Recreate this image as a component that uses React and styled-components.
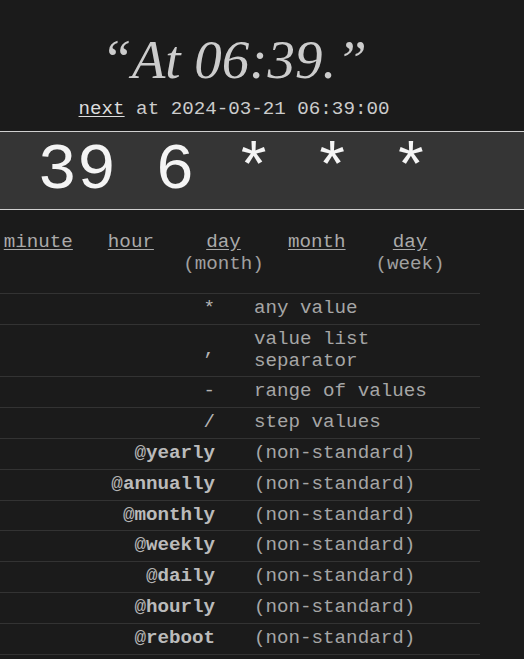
import styled, { createGlobalStyle } from "styled-components";

const GlobalStyle = createGlobalStyle`
  html, body {
    margin: 0;
    padding: 0;
    background: #1b1b1b;
    overflow: hidden;
  }
  body {
    font-family: "Liberation Mono", "Courier New", monospace;
    color: #aaa;
  }
`;

const fields = [
  { name: "minute" },
  { name: "hour" },
  { name: "day", sub: "(month)" },
  { name: "month" },
  { name: "day", sub: "(week)" },
];

const rows = [
  { sym: "*", desc: "any value" },
  { sym: ",", desc: "value list separator" },
  { sym: "-", desc: "range of values" },
  { sym: "/", desc: "step values" },
  { sym: "yearly", at: true, desc: "(non-standard)" },
  { sym: "annually", at: true, desc: "(non-standard)" },
  { sym: "monthly", at: true, desc: "(non-standard)" },
  { sym: "weekly", at: true, desc: "(non-standard)" },
  { sym: "daily", at: true, desc: "(non-standard)" },
  { sym: "hourly", at: true, desc: "(non-standard)" },
  { sym: "reboot", at: true, desc: "(non-standard)" },
];

const App = () => {
  return (
    <>
      <GlobalStyle />
      <Page>
        <Column>
          <Title>“At 06:39.”</Title>
          <NextRun>
            <NextLink>next</NextLink> at 2024-03-21 06:39:00
          </NextRun>
        </Column>
        <ExpressionBox>
          <Column>
            <Expression>39 6 * * *</Expression>
          </Column>
        </ExpressionBox>
        <FieldHeader>
          {fields.map((f, i) => (
            <Field key={i}>
              <FieldName>{f.name}</FieldName>
              {f.sub && <FieldSub>{f.sub}</FieldSub>}
            </Field>
          ))}
        </FieldHeader>
        <Legend>
          {rows.map((r) => (
            <LegendRow key={r.sym}>
              <Symbol>
                {r.at ? (
                  <>
                    @<Keyword>{r.sym}</Keyword>
                  </>
                ) : (
                  r.sym
                )}
              </Symbol>
              <Description>{r.desc}</Description>
            </LegendRow>
          ))}
        </Legend>
      </Page>
    </>
  );
};

const Page = styled.div`
  width: 524px;
  height: 659px;
  overflow: hidden;
`;

const Column = styled.div`
  width: 468px;
  text-align: center;
`;

const Title = styled.h1`
  margin: 29px 0 0;
  font-family: Georgia, "Liberation Serif", serif;
  font-style: italic;
  font-weight: normal;
  font-size: 55px;
  line-height: 62px;
  color: #cccccc;
`;

const NextRun = styled.div`
  margin-top: 7px;
  font-size: 19.2px;
  line-height: 22px;
  color: #cccccc;
`;

const NextLink = styled.span`
  color: #dddddd;
  text-decoration: underline;
  text-underline-offset: 2px;
`;

const ExpressionBox = styled.div`
  margin-top: 11px;
  background: #353535;
  border-top: 1px solid #d0d0d0;
  border-bottom: 1px solid #d0d0d0;
  height: 77px;
`;

const Expression = styled.div`
  font-size: 65.5px;
  line-height: 77px;
  color: #f4f4f4;
  white-space: pre;
`;

const FieldHeader = styled.div`
  display: grid;
  grid-template-columns: 92.6px 92.6px 92.6px 94px 92.6px;
  margin-left: -8px;
  padding: 21px 0 18px;
  width: 488px;
  border-bottom: 1px solid #333;
  font-size: 19.2px;
  line-height: 22px;
`;

const Field = styled.div`
  display: flex;
  flex-direction: column;
  align-items: center;
`;

const FieldName = styled.span`
  color: #aaaaaa;
  text-decoration: underline;
  text-underline-offset: 2px;
`;

const FieldSub = styled.span`
  color: #a0a0a0;
`;

const Legend = styled.div`
  width: 480px;
  font-size: 19.2px;
  line-height: 21.8px;
`;

const LegendRow = styled.div`
  display: grid;
  grid-template-columns: 215px 1fr;
  align-items: center;
  padding: 4px 0;
  border-bottom: 1px solid #333;
`;

const Symbol = styled.div`
  text-align: right;
  color: #b4b4b4;
`;

const Keyword = styled.b`
  font-weight: bold;
  color: #bbbbbb;
`;

const Description = styled.div`
  padding-left: 39px;
  color: #a6a6a6;
`;

export default App;
